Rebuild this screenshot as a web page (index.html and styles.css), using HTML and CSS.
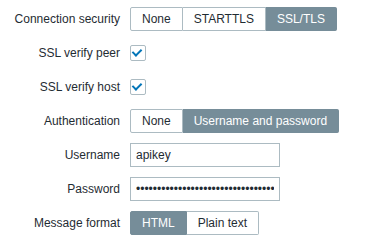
FILE: index.html
```html
<!DOCTYPE html>
<html lang="en">
<head>
    <meta charset="UTF-8">
    <title>Media type</title>
    <link rel="stylesheet" href="styles.css">
</head>
<body>
    <div class="form-grid">
        <label class="form-label">Connection security</label>
        <div class="form-field">
            <ul class="radio-list">
                <li>None</li>
                <li>STARTTLS</li>
                <li class="selected">SSL/TLS</li>
            </ul>
        </div>

        <label class="form-label">SSL verify peer</label>
        <div class="form-field">
            <span class="checkbox checked"></span>
        </div>

        <label class="form-label">SSL verify host</label>
        <div class="form-field">
            <span class="checkbox checked"></span>
        </div>

        <label class="form-label">Authentication</label>
        <div class="form-field">
            <ul class="radio-list">
                <li>None</li>
                <li class="selected">Username and password</li>
            </ul>
        </div>

        <label class="form-label">Username</label>
        <div class="form-field">
            <input class="text-input" type="text" value="apikey">
        </div>

        <label class="form-label">Password</label>
        <div class="form-field">
            <input class="text-input" type="password" value="SG.abcdefghijklmnopqrstuvwxyz01234">
        </div>

        <label class="form-label">Message format</label>
        <div class="form-field">
            <ul class="radio-list">
                <li class="selected">HTML</li>
                <li>Plain text</li>
            </ul>
        </div>
    </div>
</body>
</html>
```

FILE: styles.css
```css
body {
    margin: 0;
    background-color: #ffffff;
    font-family: Arial, 'Liberation Sans', sans-serif;
    font-size: 12px;
    color: #1f2c33;
}

.form-grid {
    display: grid;
    grid-template-columns: 120px 1fr;
    column-gap: 10px;
    row-gap: 10px;
    grid-auto-rows: 24px;
    padding-top: 7px;
}

.form-label {
    display: flex;
    align-items: center;
    justify-content: flex-end;
    text-align: right;
}

.form-field {
    display: flex;
    align-items: center;
}

.radio-list {
    display: flex;
    margin: 0;
    padding: 0;
    list-style: none;
    height: 24px;
}

.radio-list li {
    display: flex;
    align-items: center;
    padding: 0 11px;
    border: 1px solid #acbbc2;
    border-left: none;
    background-color: #ffffff;
    color: #1f2c33;
}

.radio-list li:first-child {
    border-left: 1px solid #acbbc2;
    border-radius: 2px 0 0 2px;
}

.radio-list li:last-child {
    border-radius: 0 2px 2px 0;
}

.radio-list li.selected {
    background-color: #768d99;
    border-color: #768d99;
    color: #ffffff;
}

.checkbox {
    position: relative;
    width: 14px;
    height: 14px;
    border: 1px solid #acbbc2;
    border-radius: 2px;
    background-color: #ffffff;
}

.checkbox.checked::after {
    content: "";
    position: absolute;
    left: 3px;
    top: 1px;
    width: 4px;
    height: 7px;
    border-right: 2px solid #0275b8;
    border-bottom: 2px solid #0275b8;
    transform: rotate(45deg);
}

.text-input {
    box-sizing: border-box;
    width: 150px;
    height: 24px;
    margin: 0;
    padding: 0 5px;
    border: 1px solid #acbbc2;
    border-radius: 0;
    font-family: Arial, 'Liberation Sans', sans-serif;
    font-size: 12px;
    color: #1f2c33;
    background-color: #ffffff;
    outline: none;
}
```
